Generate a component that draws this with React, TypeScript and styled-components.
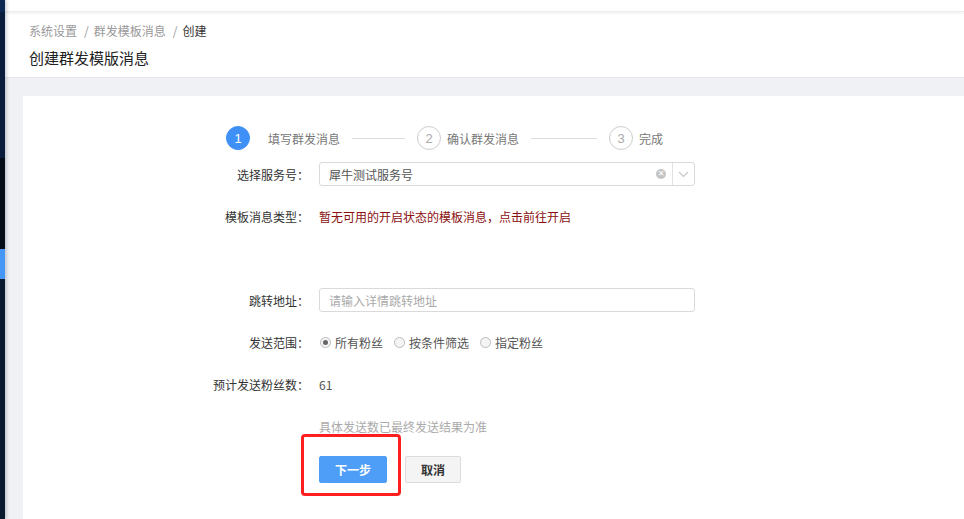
import React from "react";
import styled, { createGlobalStyle } from "styled-components";

const Global = createGlobalStyle`
  html, body { margin: 0; padding: 0; }
  body {
    font-family: "Noto Sans CJK SC", "Noto Sans", "Liberation Sans", sans-serif;
    font-size: 12px;
    color: #333;
    background: #f0f1f5;
  }
  * { box-sizing: border-box; }
`;

const Layout = styled.div`
  display: flex;
  height: 519px;
  width: 964px;
  overflow: hidden;
`;

const Sidebar = styled.div`
  width: 5px;
  flex: none;
  display: flex;
  flex-direction: column;
  background: #0a1a2e;
  box-shadow: 2px 0 3px rgba(0, 20, 50, 0.18);
  z-index: 2;
`;

const SideSeg = styled.div<{ $h: number; $c: string }>`
  height: ${(p) => p.$h}px;
  background: ${(p) => p.$c};
  flex: none;
`;

const Main = styled.div`
  flex: 1;
  display: flex;
  flex-direction: column;
  min-width: 0;
`;

const TopBar = styled.div`
  height: 12px;
  background: #fff;
  box-shadow: 0 1px 3px rgba(0, 0, 0, 0.08);
  border-bottom: 1px solid #ececec;
  position: relative;
  z-index: 1;
`;

const PageHeader = styled.div`
  background: #fff;
  height: 66px;
  padding: 10px 0 0 24px;
  border-bottom: 1px solid #e6e7ea;
`;

const Breadcrumb = styled.div`
  font-size: 12px;
  line-height: 18px;
  color: #999;
  display: flex;
  align-items: center;
`;

const Crumb = styled.span<{ $active?: boolean }>`
  color: ${(p) => (p.$active ? "#333" : "#999")};
`;

const Sep = styled.span`
  color: #999;
  padding: 0 5px 0 7px;
`;

const Title = styled.div`
  margin-top: 8px;
  font-size: 15px;
  line-height: 20px;
  color: #222;
`;

const Content = styled.div`
  flex: 1;
  padding: 18px 0 0 18px;
  display: flex;
`;

const Card = styled.div`
  flex: 1;
  background: #fff;
  padding: 30px 0 0 186px;
`;

const Steps = styled.div`
  display: flex;
  align-items: center;
  margin-left: 17px;
  height: 24px;
`;

const StepCircle = styled.div<{ $active?: boolean }>`
  width: 24px;
  height: 24px;
  border-radius: 50%;
  flex: none;
  display: flex;
  align-items: center;
  justify-content: center;
  font-family: "Liberation Sans", Arial, sans-serif;
  font-size: 13px;
  color: ${(p) => (p.$active ? "#fff" : "#aaa")};
  background: ${(p) => (p.$active ? "#3f90f6" : "#fff")};
  border: 1px solid ${(p) => (p.$active ? "#3f90f6" : "#ccc")};
`;

const StepLabel = styled.span<{ $gap: number }>`
  margin-left: ${(p) => p.$gap}px;
  color: #777;
  font-size: 12px;
  white-space: nowrap;
`;

const StepLine = styled.div<{ $w: number }>`
  width: ${(p) => p.$w}px;
  height: 1px;
  background: #dcdcdc;
  margin: 0 12px;
`;

const Row = styled.div<{ $top: number }>`
  display: flex;
  align-items: center;
  min-height: 24px;
  margin-top: ${(p) => p.$top}px;
  position: relative;
`;

const Label = styled.div`
  width: 100px;
  flex: none;
  text-align: right;
  color: #333;
  font-size: 12px;
  margin-right: 10px;
  white-space: nowrap;
`;

const Value = styled.div<{ $tone?: "warn" | "muted" }>`
  font-size: 12px;
  color: ${(p) =>
    p.$tone === "warn" ? "#8a0f0f" : p.$tone === "muted" ? "#aaa" : "#555"};
  white-space: nowrap;
`;

const SelectBox = styled.div`
  width: 376px;
  height: 24px;
  border: 1px solid #dadada;
  border-radius: 3px;
  display: flex;
  align-items: center;
  background: #fff;
`;

const SelectText = styled.span`
  flex: 1;
  padding-left: 9px;
  color: #555;
  font-size: 12px;
`;

const ClearIcon = styled.span`
  width: 10px;
  height: 10px;
  border-radius: 50%;
  background: #c4c4c4;
  color: #fff;
  font-size: 8px;
  line-height: 10px;
  text-align: center;
  font-family: "DejaVu Sans", sans-serif;
  margin-right: 6px;
`;

const Arrow = styled.span`
  width: 22px;
  height: 100%;
  border-left: 1px solid #e2e2e2;
  display: flex;
  align-items: center;
  justify-content: center;
`;

const TextInput = styled.input`
  width: 376px;
  height: 24px;
  border: 1px solid #dadada;
  border-radius: 3px;
  padding: 0 9px;
  font-family: inherit;
  font-size: 12px;
  color: #555;
  outline: none;
  &::placeholder { color: #aaa; }
`;

const Radios = styled.div`
  display: flex;
  align-items: center;
  gap: 10px;
`;

const RadioItem = styled.label`
  display: flex;
  align-items: center;
  gap: 4px;
  color: #555;
  font-size: 12px;
`;

const RadioDot = styled.span<{ $checked?: boolean }>`
  width: 11px;
  height: 11px;
  border-radius: 50%;
  border: 1px solid #bdbdbd;
  background: #f4f4f4;
  margin-left: 1px;
  display: flex;
  align-items: center;
  justify-content: center;
  &::after {
    content: "";
    width: 5px;
    height: 5px;
    border-radius: 50%;
    background: ${(p) => (p.$checked ? "#666" : "transparent")};
  }
`;

const Buttons = styled.div`
  display: flex;
  gap: 18px;
  position: relative;
`;

const Button = styled.button<{ $primary?: boolean }>`
  height: 27px;
  padding: 0;
  width: ${(p) => (p.$primary ? 68 : 56)}px;
  font-family: inherit;
  font-size: 12px;
  font-weight: 700;
  border-radius: 2px;
  border: 1px solid ${(p) => (p.$primary ? "#4e9ef8" : "#dcdcdc")};
  background: ${(p) => (p.$primary ? "#4e9ef8" : "#f4f4f4")};
  color: ${(p) => (p.$primary ? "#fff" : "#333")};
`;

const Highlight = styled.div`
  position: absolute;
  left: -18px;
  top: -22px;
  width: 100px;
  height: 62px;
  border: 3px solid #ff1f1f;
  border-radius: 4px;
  pointer-events: none;
`;

const Spacer = styled.div`
  height: 24px;
  margin-top: 18px;
`;

export default function App() {
  return (
    <>
      <Global />
      <Layout>
        <Sidebar>
          <SideSeg $h={12} $c="#0d2852" />
          <SideSeg $h={146} $c="#0b1d3d" />
          <SideSeg $h={91} $c="#030c17" />
          <SideSeg $h={30} $c="#4596f5" />
        </Sidebar>
        <Main>
          <TopBar />
          <PageHeader>
            <Breadcrumb>
              <Crumb>系统设置</Crumb>
              <Sep>/</Sep>
              <Crumb>群发模板消息</Crumb>
              <Sep>/</Sep>
              <Crumb $active>创建</Crumb>
            </Breadcrumb>
            <Title>创建群发模版消息</Title>
          </PageHeader>
          <Content>
            <Card>
              <Steps>
                <StepCircle $active>1</StepCircle>
                <StepLabel $gap={18}>填写群发消息</StepLabel>
                <StepLine $w={53} />
                <StepCircle>2</StepCircle>
                <StepLabel $gap={6}>确认群发消息</StepLabel>
                <StepLine $w={66} />
                <StepCircle>3</StepCircle>
                <StepLabel $gap={6}>完成</StepLabel>
              </Steps>

              <Row $top={12}>
                <Label>选择服务号：</Label>
                <SelectBox>
                  <SelectText>犀牛测试服务号</SelectText>
                  <ClearIcon>✕</ClearIcon>
                  <Arrow>
                    <svg width="11" height="7" viewBox="0 0 11 7">
                      <path d="M1 1 L5.5 5.5 L10 1" fill="none" stroke="#c8c8c8" strokeWidth="1.2" />
                    </svg>
                  </Arrow>
                </SelectBox>
              </Row>

              <Row $top={18}>
                <Label>模板消息类型：</Label>
                <Value $tone="warn">暂无可用的开启状态的模板消息，点击前往开启</Value>
              </Row>

              <Spacer />

              <Row $top={18}>
                <Label>跳转地址：</Label>
                <TextInput placeholder="请输入详情跳转地址" />
              </Row>

              <Row $top={18}>
                <Label>发送范围：</Label>
                <Radios>
                  <RadioItem>
                    <RadioDot $checked />
                    所有粉丝
                  </RadioItem>
                  <RadioItem>
                    <RadioDot />
                    按条件筛选
                  </RadioItem>
                  <RadioItem>
                    <RadioDot />
                    指定粉丝
                  </RadioItem>
                </Radios>
              </Row>

              <Row $top={18}>
                <Label>预计发送粉丝数：</Label>
                <Value>61</Value>
              </Row>

              <Row $top={18}>
                <Label />
                <Value $tone="muted">具体发送数已最终发送结果为准</Value>
              </Row>

              <Row $top={18}>
                <Label />
                <Buttons>
                  <Highlight />
                  <Button $primary>下一步</Button>
                  <Button>取消</Button>
                </Buttons>
              </Row>
            </Card>
          </Content>
        </Main>
      </Layout>
    </>
  );
}
